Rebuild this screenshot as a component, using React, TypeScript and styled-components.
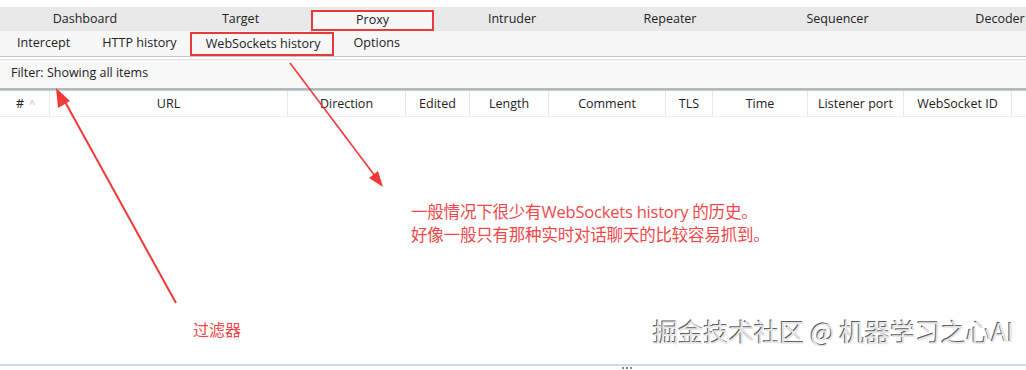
import styled, { createGlobalStyle } from 'styled-components';

const GlobalStyle = createGlobalStyle`
  html, body {
    margin: 0;
    padding: 0;
    background: #ffffff;
  }
  body {
    font-family: 'Open Sans', 'Noto Sans CJK SC', sans-serif;
    color: #222;
  }
`;

const mainTabs = [
  { label: 'Dashboard', width: 170 },
  { label: 'Target', width: 141 },
  { label: 'Proxy', width: 123, marked: true },
  { label: 'Intruder', width: 156 },
  { label: 'Repeater', width: 160 },
  { label: 'Sequencer', width: 175 },
  { label: 'Decoder', width: 150 },
];

const subTabs = [
  { label: 'Intercept' },
  { label: 'HTTP history' },
  { label: 'WebSockets history', marked: true },
  { label: 'Options' },
];

const columns = [
  { label: '#', width: 50, sort: true },
  { label: 'URL', width: 238 },
  { label: 'Direction', width: 118 },
  { label: 'Edited', width: 64 },
  { label: 'Length', width: 79 },
  { label: 'Comment', width: 117 },
  { label: 'TLS', width: 47 },
  { label: 'Time', width: 95 },
  { label: 'Listener port', width: 96 },
  { label: 'WebSocket ID', width: 108 },
];

const App = () => {
  return (
    <StPage>
      <GlobalStyle />
      <StMainTabs>
        {mainTabs.map((tab) => (
          <StMainTab key={tab.label} $width={tab.width} $marked={tab.marked}>
            {tab.label}
          </StMainTab>
        ))}
      </StMainTabs>
      <StSubTabs>
        {subTabs.map((tab) => (
          <StSubTab key={tab.label} $marked={tab.marked}>
            {tab.label}
          </StSubTab>
        ))}
      </StSubTabs>
      <StFilterBar>Filter: Showing all items</StFilterBar>
      <StTableHead>
        {columns.map((col) => (
          <StHeadCell key={col.label} $width={col.width} $left={col.sort}>
            {col.label}
            {col.sort && <StSortMark>^</StSortMark>}
          </StHeadCell>
        ))}
        <StHeadFill />
      </StTableHead>
      <StTableBody>
        <StNote>
          一般情况下很少有WebSockets history 的历史。
          <br />
          好像一般只有那种实时对话聊天的比较容易抓到。
        </StNote>
        <StFilterNote>过滤器</StFilterNote>
        <StWatermark>掘金技术社区 @ 机器学习之心AI</StWatermark>
      </StTableBody>
      <StBottomBar>
        <StGrip>
          <StDot />
          <StDot />
          <StDot />
        </StGrip>
      </StBottomBar>

      <StArrows width="1026" height="370" viewBox="0 0 1026 370">
        <line x1="176" y1="303" x2="64" y2="100" stroke="#f03a3a" strokeWidth="2" />
        <polygon points="56,88 58,108 70,101" fill="#f03a3a" />
        <line x1="290" y1="63" x2="375" y2="176" stroke="#f03a3a" strokeWidth="1.6" />
        <polygon points="383,187 369,178 378,171" fill="#f03a3a" />
      </StArrows>
    </StPage>
  );
};

export default App;

const StPage = styled.div`
  position: relative;
  width: 1026px;
  height: 370px;
  overflow: hidden;
  padding-top: 7px;
  box-sizing: border-box;
  display: flex;
  flex-direction: column;
  background: #ffffff;

  & > * {
    flex-shrink: 0;
  }
`;

const StMainTabs = styled.nav`
  display: flex;
  height: 24px;
  background: #e9e9e9;
  white-space: nowrap;
`;

const StMainTab = styled.div<{ $width: number; $marked?: boolean }>`
  flex: 0 0 ${({ $width }) => $width}px;
  display: flex;
  align-items: center;
  justify-content: center;
  box-sizing: border-box;
  padding-bottom: 2px;
  font-size: 12.5px;
  color: #222;
  ${({ $marked }) =>
    $marked &&
    `
    margin: 3px 0 0;
    padding-bottom: 3px;
    background: #f7f7f7;
    border: 2px solid #e53b3b;
  `}
`;

const StSubTabs = styled.nav`
  display: flex;
  height: 26px;
  box-sizing: border-box;
  padding-left: 1px;
  background: #f7f7f7;
  border-bottom: 1px solid #c4c4c4;
`;

const StSubTab = styled.div<{ $marked?: boolean }>`
  display: flex;
  align-items: center;
  padding: 0 16px 2px;
  box-sizing: border-box;
  font-size: 12.6px;
  color: #222;
  ${({ $marked }) =>
    $marked &&
    `
    padding: 0 12px 2px 14px;
    margin: 1px 3px 0 -3px;
    border: 2px solid #e53b3b;
  `}
`;

const StFilterBar = styled.div`
  display: flex;
  align-items: center;
  height: 31px;
  margin-top: 2px;
  border-top: 1px solid #e4e4e4;
  padding-left: 11px;
  padding-bottom: 3px;
  box-sizing: border-box;
  background: #f8f8f8;
  font-size: 12.5px;
  color: #222;
  border-bottom: 2px solid #b8b8b8;
`;

const StTableHead = styled.div`
  display: flex;
  height: 27px;
  box-sizing: border-box;
  border-top: 1px solid #b9cfe8;
  border-bottom: 1px solid #ececec;
  background: #ffffff;
`;

const StHeadCell = styled.div<{ $width: number; $left?: boolean }>`
  flex: 0 0 ${({ $width }) => $width}px;
  display: flex;
  align-items: center;
  justify-content: ${({ $left }) => ($left ? 'flex-start' : 'center')};
  padding-left: ${({ $left }) => ($left ? '16px' : '0')};
  box-sizing: border-box;
  border-right: 1px solid #e6e6e6;
  font-size: 12.5px;
  color: #222;
`;

const StSortMark = styled.span`
  margin-left: 5px;
  color: #bbb;
  font-size: 11px;
`;

const StHeadFill = styled.div`
  flex: 1;
`;

const StTableBody = styled.div`
  position: relative;
  flex: 1;
  flex-shrink: 1;
  background: #ffffff;
`;

const StNote = styled.p`
  position: absolute;
  left: 411px;
  top: 83px;
  margin: 0;
  font-size: 16.5px;
  line-height: 23px;
  color: #f04848;
  font-family: 'Open Sans', 'Noto Sans CJK SC', sans-serif;
  letter-spacing: -0.2px;
`;

const StFilterNote = styled.span`
  position: absolute;
  left: 193px;
  top: 200px;
  font-size: 16px;
  color: #f04848;
  font-family: 'Noto Sans CJK SC', sans-serif;
`;

const StWatermark = styled.span`
  position: absolute;
  right: 12px;
  top: 195px;
  font-size: 25.5px;
  color: #e6e6e6;
  font-family: 'Noto Sans CJK SC', sans-serif;
  text-shadow: -1px -1px 0 #5e5e5e, 1px 1px 0 #ffffff;
  letter-spacing: -0.2px;
`;

const StBottomBar = styled.div`
  position: relative;
  height: 4px;
  border-top: 2px solid #c9dcf0;
  background: #ffffff;
`;

const StGrip = styled.div`
  position: absolute;
  left: 622px;
  top: 1px;
  display: flex;
  gap: 2px;
`;

const StDot = styled.span`
  width: 2px;
  height: 2px;
  background: #888;
`;

const StArrows = styled.svg`
  position: absolute;
  left: 0;
  top: 0;
  pointer-events: none;
`;
